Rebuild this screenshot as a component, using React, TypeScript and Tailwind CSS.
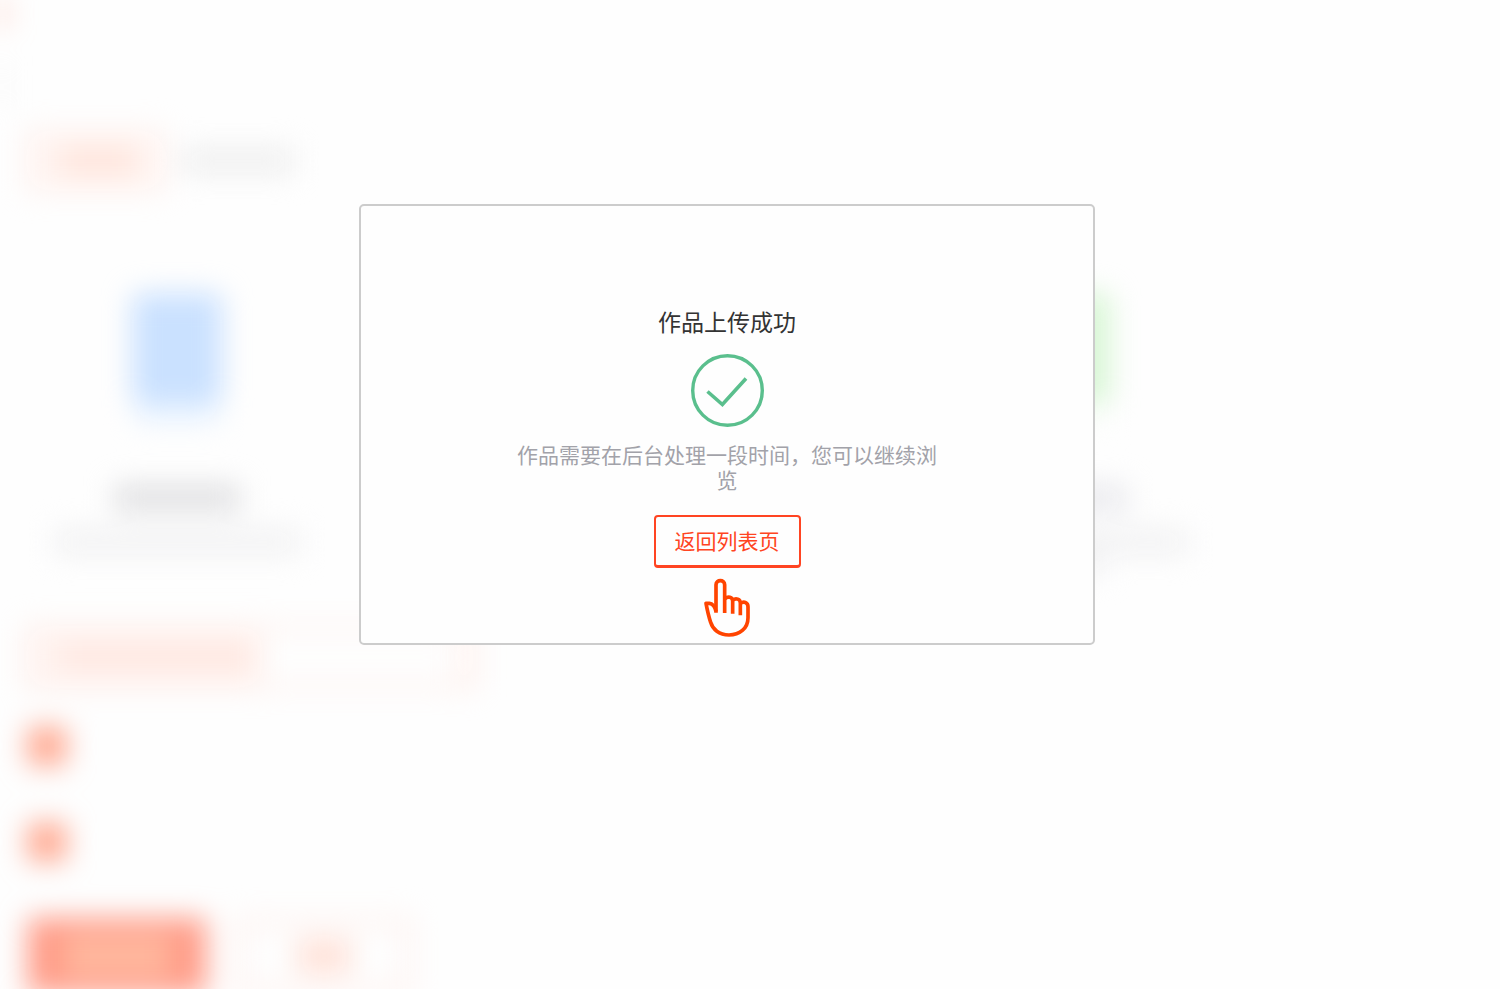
import clsx from 'clsx'

const FONT = "font-['Noto_Sans_CJK_SC',sans-serif]"

const SuccessIcon = () => (
  <svg viewBox="0 0 74 74" className="h-[74px] w-[74px]" fill="none" stroke="#5abf8d" aria-hidden="true">
    <circle cx="37.5" cy="36.5" r="34.8" strokeWidth="3.4" />
    <path d="M17.5 37.5 L32.4 50.5 L56 24.5" strokeWidth="3.6" />
  </svg>
)

const PointerIcon = () => (
  <svg
    viewBox="216 231 150 186"
    className="h-[62px] w-[50px]"
    fill="none"
    stroke="#ff4400"
    strokeWidth="11"
    strokeLinejoin="round"
    strokeLinecap="butt"
    aria-hidden="true"
  >
    <path d="M258 338 V254 C258 238 284 238 284 254 V339" />
    <path d="M284 297 C294 287 308 291 308 303 V341" />
    <path d="M308 300 C318 293 331 297 331 309 V346" />
    <path d="M331 310 C343 302 354 309 354 320 V353 C354 386 328 405 297 405 C267 405 248 388 242 367 C235 346 231 326 228 310 H238 C249 311 255 321 258 334" />
  </svg>
)

interface PlaceholderCardProps {
  iconClass: string
  footClass: string
  titleClass: string
  twoLines?: boolean
}

const PlaceholderCard = ({ iconClass, footClass, titleClass, twoLines }: PlaceholderCardProps) => (
  <div className="flex w-[250px] flex-col items-center">
    <div className={clsx('h-[110px] w-[90px] rounded-lg', iconClass)} />
    <div className={clsx('h-[20px] w-[84px]', footClass)} />
    <div className={clsx('mt-[62px] h-[26px] w-[126px]', titleClass)} />
    <div className="mt-[18px] h-[26px] w-[246px] bg-[#f2f2f3]" />
    {twoLines && <div className="h-[20px] w-[80px] bg-[#f2f2f4]" />}
  </div>
)

// Faded page content that sits behind the dialog
const Backdrop = () => (
  <div className="flex flex-col blur-[14px]" aria-hidden="true">
    <div className="h-[26px] w-[6px] bg-[#ffb5a2]" />
    <div className="mt-[40px] h-[42px] w-[3px] bg-[#e8e8e8]" />

    <div className="mt-[22px] flex items-center gap-[18px] pl-[26px]">
      <div className="flex h-[61px] w-[138px] items-center border-4 border-[#ffece7] bg-[#fff5f2] pl-[30px]">
        <div className="h-[28px] w-[76px] bg-[#ffe5dc]" />
      </div>
      <div className="h-[26px] w-[112px] bg-[#efefef]" />
    </div>

    <div className="mt-[102px] flex justify-between pr-[310px] pl-[52px]">
      <PlaceholderCard iconClass="bg-[#cae1ff]" footClass="bg-[#eaf4ff]" titleClass="bg-[#dfdfe1]" />
      <PlaceholderCard iconClass="bg-[#ffe5c8]" footClass="bg-[#fff8ee]" titleClass="bg-[#dfdfe1]" />
      <PlaceholderCard iconClass="bg-[#d8f6d5]" footClass="bg-[#fafdfa]" titleClass="bg-[#e9e9ed]" twoLines />
    </div>

    <div className="mt-[51px] ml-[26px] flex h-[62px] w-[450px] items-stretch justify-between border-4 border-[#ffe4dd]">
      <div className="flex w-[232px] items-center bg-[#fff5f2] pl-[28px]">
        <div className="h-[26px] w-[198px] bg-[#ffe7e0]" />
      </div>
      <div className="w-[18px] bg-[#fff7f5]" />
    </div>

    <div className="mt-[39px] ml-[28px] h-[38px] w-[38px] bg-[#ffa58c]" />
    <div className="mt-[58px] ml-[28px] h-[38px] w-[38px] bg-[#ffa58c]" />

    <div className="mt-[57px] flex gap-[30px] pl-[28px]">
      <div className="flex h-[76px] w-[178px] items-center justify-center bg-[#ff9a86]">
        <div className="h-[40px] w-[108px] bg-[#ffb99f]" />
      </div>
      <div className="flex h-[76px] w-[176px] items-center justify-center border-8 border-[#ffefeb]">
        <div className="h-[32px] w-[54px] bg-[#ffe0d6]" />
      </div>
    </div>
  </div>
)

const UploadSuccessDialog = () => (
  <div className="absolute inset-0 flex items-start justify-center pt-[204px] pr-[46px]">
    <div
      role="dialog"
      aria-labelledby="upload-title"
      className="flex w-full max-w-[736px] flex-col items-center rounded-[5px] border-2 border-[#cccccc] bg-[#fefefe] pt-[100px] pb-1"
    >
      <h1 id="upload-title" className="text-[23px] leading-[30px] text-[#333333]">作品上传成功</h1>
      <div className="mt-[18px]">
        <SuccessIcon />
      </div>
      <p className="mt-[14px] max-w-[430px] text-center text-[21px] leading-[25px] text-[#a2a2a9]">
        作品需要在后台处理一段时间，您可以继续浏览
      </p>
      <button
        type="button"
        className="mt-[23px] h-[53px] cursor-pointer rounded-[4px] border-2 border-b-[3px] border-[#ff4422] px-[19px] text-[21px] text-[#ff4422]"
      >
        返回列表页
      </button>
      <div className="mt-[9px]">
        <PointerIcon />
      </div>
    </div>
  </div>
)

export default function App() {
  return (
    <div className={clsx('relative h-screen overflow-hidden bg-[#fefefe]', FONT)}>
      <Backdrop />
      <UploadSuccessDialog />
    </div>
  )
}
